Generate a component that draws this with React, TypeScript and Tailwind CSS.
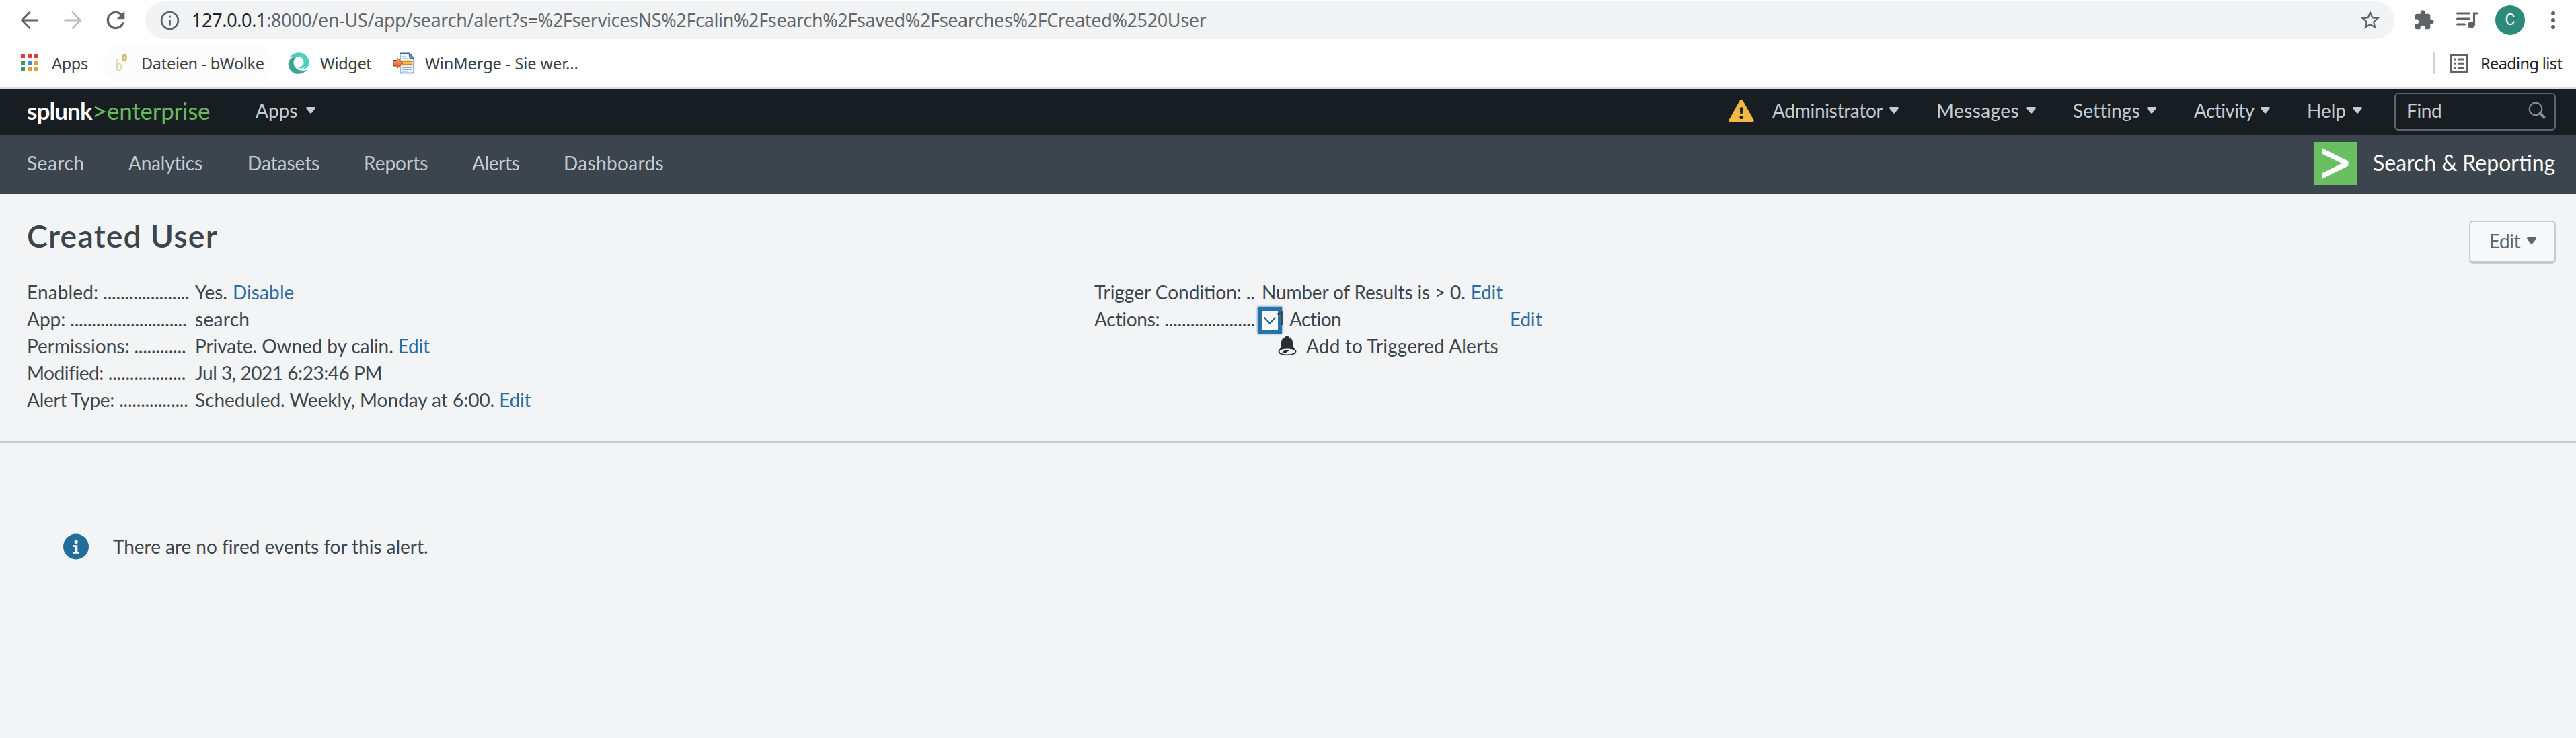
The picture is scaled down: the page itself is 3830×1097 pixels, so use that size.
import type { ReactNode } from "react";

function Caret({ className = "text-[#c3cbd4]" }: { className?: string }) {
  return (
    <svg viewBox="0 0 14 10" className={"w-[14px] h-[10px] shrink-0 " + className} fill="currentColor">
      <path d="M1.6 0h10.8c1.3 0 2 1.4 1.2 2.400L8.200 9.100c-.6.8-1.800.8-2.400 0L.4 2.400C-.4 1.400.3 0 1.600 0z" />
    </svg>
  );
}

function Material({ d, className }: { d: string; className: string }) {
  return (
    <svg viewBox="0 0 24 24" className={"shrink-0 " + className} fill="#5f6368">
      <path d={d} />
    </svg>
  );
}

function Toolbar() {
  return (
    <div className="flex h-[60px] items-center">
      <svg viewBox="0 0 26 26" className="ml-[31px] size-[26px] shrink-0" fill="none" stroke="#5f6368" strokeWidth="2.8" strokeLinecap="round" strokeLinejoin="round">
        <path d="M24.500 13H2M13 1.500 1.500 13 13 24.500" />
      </svg>
      <svg viewBox="0 0 26 26" className="ml-[38px] size-[26px] shrink-0" fill="none" stroke="#bcbdbf" strokeWidth="2.800" strokeLinecap="round" strokeLinejoin="round">
        <path d="M1.500 13H24M13 1.500 24.500 13 13 24.500" />
      </svg>
      <Material
        className="ml-[31px] size-[40px]"
        d="M17.650 6.350C16.200 4.900 14.210 4 12 4c-4.420 0-7.990 3.580-7.990 8s3.570 8 7.990 8c3.730 0 6.840-2.550 7.730-6h-2.080c-.82 2.330-3.040 4-5.650 4-3.310 0-6-2.690-6-6s2.690-6 6-6c1.660 0 3.140.69 4.220 1.780L13 11h7V4l-2.350 2.350z"
      />
      <div className="ml-[24px] flex h-[56px] w-[3344px] items-center rounded-full bg-[#f1f3f4]">
        <Material
          className="ml-[20px] mt-px size-[33px]"
          d="M11 7h2v2h-2zm0 4h2v6h-2zm1-9C6.480 2 2 6.480 2 12s4.480 10 10 10 10-4.480 10-10S17.520 2 12 2zm0 18c-4.410 0-8-3.590-8-8s3.590-8 8-8 8 3.590 8 8-3.590 8-8 8z"
        />
        <div className="ml-[16px] whitespace-nowrap text-[27px] leading-[40px] tracking-[-0.36px] text-[#63676b]">
          <span className="text-[#202124]">127.0.0.1</span>
          :8000/en-US/app/search/alert?s=%2FservicesNS%2Fcalin%2Fsearch%2Fsaved%2Fsearches%2FCreated%2520User
        </div>
        <Material
          className="ml-auto mr-[19px] size-[34px]"
          d="M22 9.240l-7.190-.62L12 2 9.190 8.630 2 9.240l5.460 4.730L5.820 21 12 17.270 18.180 21l-1.630-7.030L22 9.240zM12 15.400l-3.760 2.270 1-4.280-3.320-2.880 4.380-.38L12 6.100l1.710 4.040 4.380.38-3.320 2.880 1 4.280L12 15.400z"
        />
      </div>
      <Material
        className="ml-[28px] size-[32px]"
        d="M20.500 11H19V7c0-1.100-.9-2-2-2h-4V3.500C13 2.120 11.880 1 10.500 1S8 2.120 8 3.500V5H4c-1.100 0-1.990.9-1.990 2v3.800H3.500c1.490 0 2.700 1.210 2.700 2.700s-1.210 2.700-2.700 2.700H2V20c0 1.100.9 2 2 2h3.800v-1.500c0-1.490 1.210-2.700 2.700-2.700 1.490 0 2.700 1.210 2.700 2.700V22H17c1.100 0 2-.9 2-2v-4h1.500c1.380 0 2.500-1.120 2.500-2.500S21.880 11 20.500 11z"
      />
      <svg viewBox="0 0 32 26" className="ml-[32px] h-[26px] w-[32px] shrink-0" fill="none" stroke="#5f6368" strokeWidth="3" strokeLinecap="round">
        <path d="M1.500 3h18M1.500 11h18M1.500 19h11" />
        <path d="M26.500 20V3H31" strokeWidth="3.200" />
        <circle cx="22" cy="20" r="5" fill="#5f6368" stroke="none" />
      </svg>
      <div className="ml-[26px] flex size-[44px] items-center justify-center rounded-full bg-[#2c8a7b] font-[Roboto] text-[23px] text-white">C</div>
      <svg viewBox="0 0 6 26" className="ml-[39px] h-[26px] w-[6px] shrink-0" fill="#5f6368">
        <circle cx="3" cy="3" r="3" />
        <circle cx="3" cy="13" r="3" />
        <circle cx="3" cy="23" r="3" />
      </svg>
    </div>
  );
}

const GRID = [
  "bg-[#dd3d39]", "bg-[#dd3d39]", "bg-[#dd3d39]",
  "bg-[#43995a]", "bg-[#3f8be4]", "bg-[#e0a035]",
  "bg-[#43995a]", "bg-[#e0a035]", "bg-[#e0a035]",
];

function Bookmarks() {
  return (
    <div className="flex h-[70px] items-center pb-[2px] text-[23.500px] leading-[32px] whitespace-nowrap text-[#3c4043]">
      <div className="ml-[31px] mt-[-3px] grid shrink-0 grid-cols-[6px_6px_6px] grid-rows-[6px_6px_6px] gap-[4px]">
        {GRID.map((c, i) => (
          <span key={i} className={c} />
        ))}
      </div>
      <span className="ml-[20px] w-[75px] tracking-[-0.300px]">Apps</span>
      <div className="flex h-[54px] w-[252px] shrink-0 items-center rounded-full bg-[#fcfcfc]">
        <svg viewBox="0 0 18 28" className="ml-[20px] h-[28px] w-[18px] shrink-0" fill="none" stroke="#e0d5a4">
          <path d="M1.500 7v17" strokeWidth="2" />
          <ellipse cx="5" cy="19.500" rx="3.500" ry="5" strokeWidth="2" />
          <ellipse cx="13" cy="6" rx="2.800" ry="4.200" stroke="#cdbb62" strokeWidth="2.400" fill="#e6dba8" />
        </svg>
        <span className="ml-[20px] tracking-[-0.300px]">Dateien - bWolke</span>
      </div>
      <svg viewBox="0 0 32 32" className="ml-[24px] size-[32px] shrink-0">
        <path d="M2.500 8C7.500-.5 20-2.500 27.500 5c7 7.500 5 18-5.500 21 3-3.500 4.500-6.500 4-11C25.500 6.500 13 3.500 2.500 8z" fill="#4fd0bb" />
        <path d="M29 25.500C21 34.500 8 33.500 3 25-2.500 15.500 1.500 6.500 15 5.500 8 8.500 7 16 10.500 21.500c4 5.500 11.500 6.500 18.500 4z" fill="#3fa392" />
        <path d="M14 21.500c5 .5 9-2 9.500-6 .5-3.500-1.500-6-4.500-7.500 5 0 9 4 8.500 9-1 6.500-8.500 8.500-13.500 4.500z" fill="#4fd0bb" />
      </svg>
      <span className="ml-[16px] w-[108px] shrink-0 tracking-[-0.350px]">Widget</span>
      <svg viewBox="0 0 34 32" className="h-[32px] w-[34px] shrink-0">
        <defs>
          <linearGradient id="wmArrow" x1="0" y1="0" x2="0" y2="1">
            <stop offset="0" stopColor="#f9b27a" />
            <stop offset="1" stopColor="#d8531f" />
          </linearGradient>
        </defs>
        <path d="M10.700 1.200h14l6.600 7v22.200H10.700z" fill="#eef5fd" stroke="#44699c" strokeWidth="1.500" />
        <path d="M24 1.500l7 7h-6z" fill="#6d9bd0" stroke="#44699c" />
        <path d="M13 6h7M13 9h10M13 22.500h15M13 25.500h16M13 28h10" stroke="#84b4e6" strokeWidth="1.200" />
        <path d="M11.500 11.500h18v8h-18z" fill="#fbd253" />
        <path d="M11.500 13.500h18M11.500 17.500h18" stroke="#e08a2c" strokeWidth="1.300" />
        <path d="M.8 11.500h5.700V8l8.500 8-8.500 7.500v-3.500H.8z" fill="url(#wmArrow)" stroke="#a3331b" strokeWidth="1" />
      </svg>
      <span className="ml-[14px] tracking-[-0.050px]">WinMerge - Sie wer...</span>
      <span className="ml-auto h-[32px] w-[2px] bg-[#cfd1d4]" />
      <svg viewBox="0 0 28 28" className="ml-[22px] size-[28px] shrink-0" fill="#5f6368">
        <path d="M2 0h24a2 2 0 0 1 2 2v24a2 2 0 0 1-2 2H2a2 2 0 0 1-2-2V2a2 2 0 0 1 2-2zm1 3v22h22V3z" fillRule="evenodd" />
        <path d="M6 6.500h3v3H6zm0 6.200h3v3H6zm0 6.200h3v3H6zM12.500 6.500h9.500v3h-9.500zm0 6.200h9.500v3h-9.500zm0 6.200h9.500v3h-9.500z" />
      </svg>
      <span className="ml-[18px] w-[142px] tracking-[-0.600px] text-[#202124]">Reading list</span>
    </div>
  );
}

function Menu({ label, cell, text }: { label: string; cell: string; text: string }) {
  return (
    <div className={"flex shrink-0 items-center " + cell}>
      <span className={"shrink-0 " + text}>{label}</span>
      <Caret />
    </div>
  );
}

function TopBar() {
  return (
    <div className="flex h-[68px] items-center bg-[#171d21] pl-[40px] pr-[30px] pb-[4px] whitespace-nowrap text-[#c3cbd4]">
      <div className="flex w-[340px] shrink-0 items-center text-[35px] leading-[40px]">
        <span className="w-[100px] font-bold tracking-[-0.900px] text-white">splunk</span>
        <svg viewBox="0 0 17 18" className="mt-[4px] h-[18px] w-[17px] shrink-0" fill="none" stroke="#65bb5c" strokeWidth="2.800">
          <path d="M1 2l13.500 7L1 16" />
        </svg>
        <span className="ml-[2px] tracking-[-0.250px] text-[#65bb5c]">enterprise</span>
      </div>
      <Menu label="Apps" cell="" text="w-[75px]" />
      <svg viewBox="0 0 38 33" className="ml-auto mr-[27px] h-[33px] w-[38px] shrink-0">
        <path d="M16.700 1.500c1-2 3.600-2 4.600 0l16 28.500c.8 1.500 0 3-1.700 3H2.400c-1.700 0-2.500-1.500-1.700-3z" fill="#f1b843" />
        <path d="M16.800 11.500h4.400l-.6 10.500h-3.200z" fill="#171d21" />
        <circle cx="19" cy="26.500" r="2.600" fill="#171d21" />
      </svg>
      <Menu label="Administrator" cell="w-[244px]" text="w-[174px] tracking-[-0.300px]" />
      <Menu label="Messages" cell="w-[203px]" text="w-[134px] tracking-[0.400px]" />
      <Menu label="Settings" cell="w-[180px]" text="w-[110px] tracking-[0.100px]" />
      <Menu label="Activity" cell="w-[168px]" text="w-[99px] tracking-[-0.600px]" />
      <Menu label="Help" cell="w-[130px]" text="w-[68px]" />
      <div className="mt-[4px] flex h-[56px] w-[240px] shrink-0 items-center rounded-[6px] border-2 border-[#5c6773] pb-[4px] pl-[16px] pr-[13px]">
        <span className="tracking-[-0.400px]">Find</span>
        <svg viewBox="0 0 26 26" className="ml-auto size-[26px]" fill="none" stroke="#818d99">
          <circle cx="11" cy="11" r="9.300" strokeWidth="2.200" />
          <path d="M17.500 17.500l6 6" strokeWidth="4" strokeLinecap="round" />
        </svg>
      </div>
    </div>
  );
}

const TABS = [
  { label: "Search", style: "w-[151px] tracking-[0.500px]" },
  { label: "Analytics", style: "w-[177px] tracking-[-0.200px]" },
  { label: "Datasets", style: "w-[173px] tracking-[-0.050px]" },
  { label: "Reports", style: "w-[161px]" },
  { label: "Alerts", style: "w-[136px] tracking-[-0.400px]" },
  { label: "Dashboards", style: "w-[150px] tracking-[0.350px]" },
];

function NavBar() {
  return (
    <div className="flex h-[88px] items-center bg-[#3c444d] pb-[5px] pl-[40px] pr-[30px] whitespace-nowrap text-[#c3cbd4]">
      {TABS.map((t) => (
        <span key={t.label} className={"shrink-0 " + t.style}>{t.label}</span>
      ))}
      <svg viewBox="0 0 64 64" className="ml-auto mt-[3px] size-[64px]">
        <path d="M0 0h64v64H0z" fill="#6bbf63" />
        <path d="M12 9l39.500 19.500v7L12 55v-8.500L42 32 12 17.500z" fill="#fff" />
      </svg>
      <span className="ml-[24px] w-[272px] text-[32px] leading-[40px] text-white">Search &amp; Reporting</span>
    </div>
  );
}

function Row({ label, cls = "", dots, children }: { label: string; cls?: string; dots: string; children: ReactNode }) {
  return (
    <div className="flex h-[40px] items-center gap-[8px] leading-[40px] whitespace-nowrap">
      <div className="flex w-[241px] shrink-0">
        <span className={"mr-[7px] shrink-0 " + cls}>{label}</span>
        <span className="tracking-[-0.200px]">{dots}</span>
      </div>
      <div className="flex items-center">{children}</div>
    </div>
  );
}

function Link({ children, className = "ml-[7px]" }: { children: ReactNode; className?: string }) {
  return <a className={"tracking-[-0.200px] text-[#2c6ca3] " + className}>{children}</a>;
}

function Bell() {
  return (
    <svg viewBox="0 0 28 30" className="ml-[26px] h-[30px] w-[28px] shrink-0">
      <path d="M10.500 2.500C10.500 0 16.500 0 16.500 2.500 22 4 22 9 22.500 14c.3 3.500 2 5 3.500 7.500H1.500C3.500 19 4.500 17.500 4.700 14 5 9 5 4 10.500 2.500z" fill="#2b2f33" />
      <ellipse cx="14" cy="23.500" rx="12.500" ry="4.900" fill="#f2f4f5" stroke="#2b2f33" strokeWidth="1.800" />
      <path d="M6.500 24.500c2-2.500 6-3.500 10-2.500-1 1.500-3.500 1.500-4 3-1.500 1.500-4.500 1-6-.5z" fill="#2b2f33" />
    </svg>
  );
}

export default function App() {
  return (
    <div className="h-[1097px] w-[3830px] overflow-hidden bg-[#f2f4f5] font-[Lato,sans-serif] text-[28px] leading-[34px] text-[#3c444d]">
      <div className="h-[132px] border-b-2 border-[#d9dddc] bg-white font-['Noto_Sans',sans-serif]">
        <Toolbar />
        <Bookmarks />
      </div>
      <TopBar />
      <NavBar />
      <div className="flex h-[126px] items-start justify-between pl-[40px] pr-[30px] pt-[32px]">
        <h1 className="text-[46.500px] leading-[60px] font-semibold tracking-[1.200px]">Created User</h1>
        <button className="mt-[8px] flex h-[64px] w-[129px] items-center rounded-[6px] border-2 border-b-4 border-[#c3cbd4] bg-[#f7f8fa] pb-[2px] pl-[28px] text-[#5c6773]">
          <span className="w-[56px] shrink-0 text-left tracking-[-0.500px]">Edit</span>
          <Caret className="text-[#5c6773]" />
        </button>
      </div>
      <div className="grid h-[244px] grid-cols-[1587px_1fr] border-b-2 border-[#c3cbd4] pl-[40px]">
        <div>
          <Row label="Enabled:" cls="tracking-[0.150px]" dots="...................."><span className="ml-px">Yes.</span><Link className="ml-[8px] tracking-[0.100px]">Disable</Link></Row>
          <Row label="App:" dots="..........................."><span className="ml-px tracking-[0.300px]">search</span></Row>
          <Row label="Permissions:" dots="............"><span className="ml-px tracking-[-0.080px]">Private. Owned by calin.</span><Link>Edit</Link></Row>
          <Row label="Modified:" cls="tracking-[-0.450px]" dots=".................."><span className="ml-px tracking-[-0.450px]">Jul 3, 2021 6:23:46 PM</span></Row>
          <Row label="Alert Type:" cls="tracking-[-0.250px]" dots="................"><span className="ml-px tracking-[-0.020px]">Scheduled. Weekly, Monday at 6:00.</span><Link>Edit</Link></Row>
        </div>
        <div>
          <Row label="Trigger Condition:" dots=".."><span className="tracking-[-0.150px]">Number of Results is &gt; 0.</span><Link className="ml-[8px]">Edit</Link></Row>
          <Row label="Actions:" cls="tracking-[-0.250px]" dots=".....................">
            <span className="relative -ml-[6px] mt-[4px] flex h-[40px] w-[36px] shrink-0 items-center justify-center border-[6px] border-[#2672ab] bg-[#f9fafb] shadow-[0_0_3px_#2672ab]">
              <svg viewBox="0 0 20 13" className="h-[13px] w-[20px] shrink-0" fill="none" stroke="#1f6098" strokeWidth="2">
                <path d="M1.500 1.500l8.500 9 8.500-9" />
              </svg>
            </span>
            <span className="relative -ml-[9px] w-[20px] font-[Roboto]">1</span>
            <span className="w-[328px] tracking-[-0.500px]">Action</span>
            <Link className="">Edit</Link>
          </Row>
          <div className="flex h-[40px] items-center pl-[247px]">
            <Bell />
            <span className="ml-[14px] leading-[40px] tracking-[0.150px]">Add to Triggered Alerts</span>
          </div>
        </div>
      </div>
      <div className="mt-[135px] flex h-[39px] items-center pl-[94px]">
        <svg viewBox="0 0 38 39" className="h-[39px] w-[38px] shrink-0">
          <circle cx="19" cy="19.500" r="19" fill="#236d9a" />
          <circle cx="19.200" cy="12.300" r="2.700" fill="#fff" />
          <path d="M14.500 17.200h6.800v9.800h2.700v2.800h-9.700V27h2.900v-7h-2.700z" fill="#fff" />
        </svg>
        <span className="ml-[36px] mt-[-2px] tracking-[-0.040px]">There are no fired events for this alert.</span>
      </div>
    </div>
  );
}
